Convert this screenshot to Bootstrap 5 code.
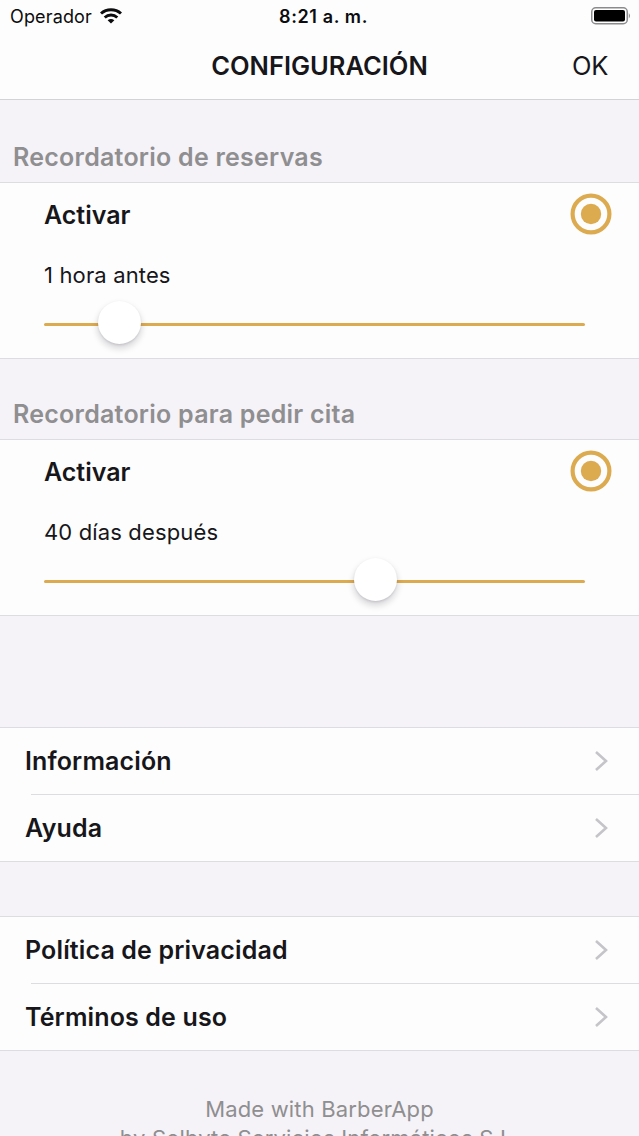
<!DOCTYPE html>
<html lang="es">
<head>
<meta charset="utf-8">
<meta name="viewport" content="width=device-width, initial-scale=1">
<title>Configuración</title>
<link href="https://cdn.jsdelivr.net/npm/bootstrap@5.3.0/dist/css/bootstrap.min.css" rel="stylesheet">
<style>
:root { --gold: #dcab50; --line: #dddce0; --panel: #f5f3f7; --ink: #17161a; --muted: #8f8e91; }
html, body { height: 100%; }
body { font-family: Inter, "Liberation Sans", sans-serif; background: var(--panel); color: var(--ink); line-height: 1; }
.screen { height: 1136px; }
.topbar { height: 100px; background: #fdfdfd; border-bottom: 1px solid #d3d2d6; }
.status-row { height: 32px; padding: 0 8px 0 10px; color: #0c0c0e; }
.carrier { font-size: 18px; letter-spacing: .15px; padding-top: 2px; }
.clock { font-size: 18px; font-weight: 600; letter-spacing: .62px; padding: 2px 0 0 6px; }
.title-row { height: 67px; padding: 0 31px 0 31px; }
.screen-title { font-size: 25.5px; font-weight: 600; letter-spacing: 0; padding-top: 2px; }
.ok-link { font-size: 25.5px; letter-spacing: -.3px; color: var(--ink); }
.section-title { font-size: 25px; font-weight: 600; color: var(--muted); padding: 0 13px 10px; letter-spacing: .24px; }
.section-first { height: 82px; }
.section-next { height: 80px; }
.panel { height: 177px; background: #fdfdfd; border-top: 1px solid var(--line); border-bottom: 1px solid var(--line); padding: 10px 27px 0 44px; }
.panel-head { height: 43px; }
.panel-label { font-size: 25px; font-weight: 600; letter-spacing: 0; padding-top: 10px; }
.panel-value { font-size: 22px; letter-spacing: .14px; height: 24px; margin-top: 28px; }
.gold-range { width: 541px; height: 44px; display: block; margin: 14px 0 0 -.5px; }
.gold-range::-webkit-slider-runnable-track { height: 3px; background: var(--gold); border-radius: 2px; }
.gold-range::-webkit-slider-thumb { width: 43px; height: 43px; margin-top: -22px; border-radius: 50%; background: #fff; box-shadow: 0 4px 7px rgba(30,20,40,.2), 0 1px 2px rgba(30,20,40,.1); }
.menu-group { background: #fdfdfd; --bs-list-group-bg: #fdfdfd; border-top: 1px solid var(--line); border-bottom: 1px solid var(--line); }
.menu-row { height: 66px; padding: 0 31px 0 25px; border: 0; color: var(--ink); font-size: 25px; font-weight: 600; letter-spacing: .14px; }
.divider-line { height: 1px; margin-left: 31px; background: var(--line); }
.credits { margin-top: 44px; font-size: 22px; line-height: 29px; color: var(--muted); letter-spacing: .16px; }
</style>
</head>
<body>
<div class="screen overflow-hidden d-flex flex-column">
  <header class="topbar flex-shrink-0">
    <div class="status-row row g-0 align-items-center">
      <div class="col d-flex align-items-center gap-2"><span class="carrier">Operador</span>
        <svg width="22" height="16" viewBox="0 0 22 16" fill="none" stroke="#0c0c0e" stroke-width="3"><path d="M1 5.5C6.6.5 15.4.5 21 5.5"/><path d="M4.7 9.5C8.3 6.3 13.7 6.3 17.3 9.5"/><path d="M7.6 12.3Q11 9.6 14.4 12.3L11 15.6Z" fill="#0c0c0e" stroke="none"/></svg>
      </div>
      <div class="col-auto clock">8:21 a. m.</div>
      <div class="col d-flex justify-content-end">
        <svg width="40" height="18" viewBox="0 0 40 18"><rect x=".75" y=".75" width="35.5" height="16" rx="4" fill="#fff" stroke="#8b8b8d" stroke-width="1.5"/><rect x="3" y="3" width="31" height="11.5" rx="2" fill="#000"/><path d="M37.8 6Q40.2 8.8 37.8 11.6Z" fill="#8b8b8d"/></svg>
      </div>
    </div>
    <div class="title-row row g-0 align-items-center">
      <div class="col"></div>
      <h1 class="screen-title col-auto m-0">CONFIGURACIÓN</h1>
      <div class="col text-end"><a href="#" class="ok-link text-decoration-none">OK</a></div>
    </div>
  </header>

  <h2 class="section-title section-first d-flex align-items-end m-0 flex-shrink-0">Recordatorio de reservas</h2>
  <section class="panel flex-shrink-0">
    <div class="panel-head d-flex justify-content-between">
      <span class="panel-label">Activar</span>
      <svg width="42" height="42" viewBox="0 0 42 42"><circle cx="21" cy="21" r="18.4" fill="none" stroke="#dcab50" stroke-width="4.2"/><circle cx="21" cy="21" r="10.2" fill="#dcab50"/></svg>
    </div>
    <div class="panel-value">1 hora antes</div>
    <input type="range" class="form-range gold-range" min="0" max="1000" value="109" aria-label="Horas antes">
  </section>

  <h2 class="section-title section-next d-flex align-items-end m-0 flex-shrink-0">Recordatorio para pedir cita</h2>
  <section class="panel flex-shrink-0">
    <div class="panel-head d-flex justify-content-between">
      <span class="panel-label">Activar</span>
      <svg width="42" height="42" viewBox="0 0 42 42"><circle cx="21" cy="21" r="18.4" fill="none" stroke="#dcab50" stroke-width="4.2"/><circle cx="21" cy="21" r="10.2" fill="#dcab50"/></svg>
    </div>
    <div class="panel-value">40 días después</div>
    <input type="range" class="form-range gold-range" min="0" max="1000" value="623" aria-label="Días después">
  </section>

  <nav class="menu-group list-group list-group-flush rounded-0 flex-shrink-0" style="margin-top:111px">
    <a href="#" class="menu-row list-group-item d-flex align-items-center justify-content-between">Información
      <svg width="13" height="20" viewBox="0 0 13 20" fill="none" stroke="#c5c4c9" stroke-width="2.6"><path d="M1 1L11 10L1 19"/></svg></a>
    <div class="divider-line"></div>
    <a href="#" class="menu-row list-group-item d-flex align-items-center justify-content-between">Ayuda
      <svg width="13" height="20" viewBox="0 0 13 20" fill="none" stroke="#c5c4c9" stroke-width="2.6"><path d="M1 1L11 10L1 19"/></svg></a>
  </nav>

  <nav class="menu-group list-group list-group-flush rounded-0 flex-shrink-0" style="margin-top:54px">
    <a href="#" class="menu-row list-group-item d-flex align-items-center justify-content-between">Política de privacidad
      <svg width="13" height="20" viewBox="0 0 13 20" fill="none" stroke="#c5c4c9" stroke-width="2.6"><path d="M1 1L11 10L1 19"/></svg></a>
    <div class="divider-line"></div>
    <a href="#" class="menu-row list-group-item d-flex align-items-center justify-content-between">Términos de uso
      <svg width="13" height="20" viewBox="0 0 13 20" fill="none" stroke="#c5c4c9" stroke-width="2.6"><path d="M1 1L11 10L1 19"/></svg></a>
  </nav>

  <footer class="credits text-center flex-shrink-0">Made with BarberApp<br>by Solbyte Servicios Informáticos S.L.</footer>
</div>
<script src="https://cdn.jsdelivr.net/npm/bootstrap@5.3.0/dist/js/bootstrap.bundle.min.js"></script>
</body>
</html>
